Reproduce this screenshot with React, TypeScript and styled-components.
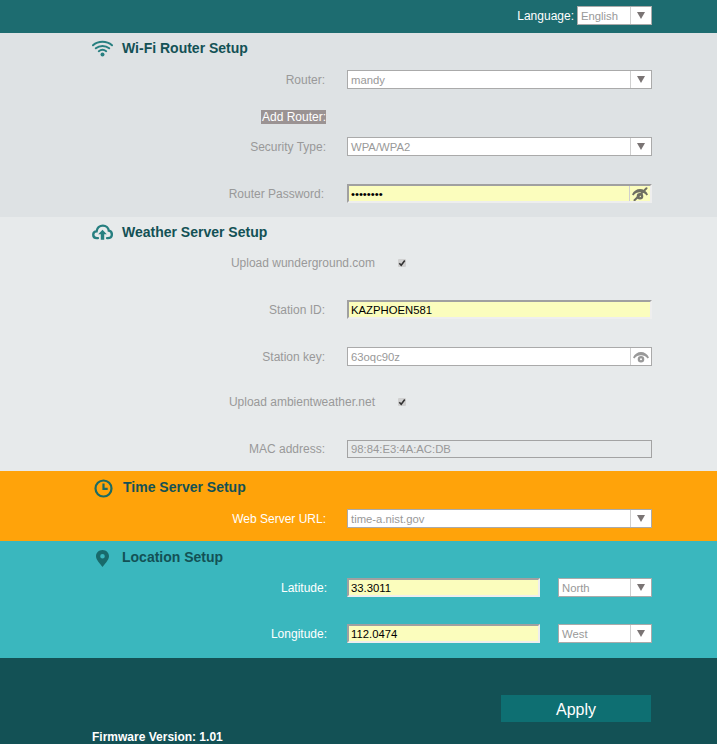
import React from "react";
import styled, { createGlobalStyle } from "styled-components";

const Global = createGlobalStyle`
  html, body { margin: 0; padding: 0; background: #135155; }
  body { font-family: "Liberation Sans", Arial, sans-serif; font-size: 12px; }
`;

const Page = styled.div`
  width: 717px;
  height: 744px;
  overflow: hidden;
  display: flex;
  flex-direction: column;
`;

const Header = styled.header`
  height: 33px;
  background: #1d6c70;
  display: flex;
  align-items: center;
  justify-content: flex-end;
  padding: 0 65px 2px 0;
  box-sizing: border-box;
  gap: 3px;
`;

const HeaderLabel = styled.span`
  color: #fff;
  font-size: 12px;
`;

const Section = styled.section<{ $bg: string; $h: number }>`
  background: ${(p) => p.$bg};
  height: ${(p) => p.$h}px;
  box-sizing: border-box;
  flex: none;
`;

const Title = styled.div<{ $top?: number }>`
  height: 30px;
  margin-top: ${(p) => p.$top ?? 0}px;
  padding-left: 92px;
  display: flex;
  align-items: center;
  gap: 9px;
`;

const TitleText = styled.h2<{ $left?: number }>`
  margin: 0 0 0 ${(p) => p.$left ?? 0}px;
  color: #135155;
  font-size: 14px;
  font-weight: bold;
`;

const IconSlot = styled.span<{ $end?: boolean; $drop?: number }>`
  width: 21px;
  height: 21px;
  padding-top: ${(p) => p.$drop ?? 0}px;
  box-sizing: border-box;
  display: flex;
  align-items: center;
  justify-content: ${(p) => (p.$end ? "flex-end" : "center")};
  flex: none;
`;

const Row = styled.div<{ $top: number; $h?: number }>`
  display: flex;
  align-items: center;
  height: ${(p) => p.$h ?? 19}px;
  margin-top: ${(p) => p.$top}px;
`;

const Label = styled.span<{ $w?: number; $light?: boolean }>`
  width: ${(p) => p.$w ?? 325}px;
  flex: none;
  text-align: right;
  color: ${(p) => (p.$light ? "#fff" : "#999")};
  font-size: 12px;
`;

const LabelCell = styled.span`
  width: 326px;
  flex: none;
  display: flex;
  justify-content: flex-end;
`;

const Highlight = styled.span`
  background: #9b9393;
  color: #fff;
  font-size: 12px;
  line-height: 14px;
  padding-left: 1px;
`;

const FieldBase = styled.div<{ $w?: number; $left?: number }>`
  width: ${(p) => p.$w ?? 305}px;
  margin-left: ${(p) => p.$left ?? 22}px;
  height: 19px;
  box-sizing: border-box;
  display: flex;
  align-items: stretch;
  flex: none;
  font-size: 11.3px;
`;

const Boxed = styled(FieldBase)`
  border: 1px solid #aaa;
  background: #fff;
  color: #999;
`;

const Disabled = styled(FieldBase)`
  height: 18px;
  border: 1px solid #a3a3a3;
  color: #999;
`;

const Inset = styled(FieldBase)`
  background: #fbfdbd;
  color: #000;
  border-style: solid;
  border-width: 2px 2px 2px 2px;
  border-color: #a0a0a0 #eeeeee #eeeeee #a0a0a0;
`;

const Value = styled.span<{ $inset?: boolean }>`
  flex: 1;
  min-width: 0;
  display: flex;
  align-items: center;
  padding-left: ${(p) => (p.$inset ? 2 : 3)}px;
  white-space: nowrap;
  overflow: hidden;
`;

const Addon = styled.span`
  width: 20px;
  flex: none;
  border-left: 1px solid #cfcfcf;
  display: flex;
  align-items: center;
  justify-content: center;
`;

const Arrow = styled.span`
  width: 0;
  height: 0;
  border-left: 4px solid transparent;
  border-right: 4px solid transparent;
  border-top: 7px solid #7a7474;
`;

const Check = styled.span`
  width: 8px;
  height: 8px;
  margin-left: 23px;
  background: #d0d0d0;
  border-radius: 1px;
  display: flex;
  align-items: center;
  justify-content: center;
  flex: none;
`;

const Footer = styled.footer`
  flex: 1;
  background: #135155;
  display: flex;
  flex-direction: column;
`;

const ApplyRow = styled.div`
  display: flex;
  justify-content: flex-end;
  padding: 37px 66px 0 0;
`;

const Apply = styled.button`
  width: 150px;
  height: 27px;
  border: 0;
  padding: 2px 0 0 0;
  background: #0e6f72;
  color: #fff;
  font-family: inherit;
  font-size: 16px;
`;

const Firmware = styled.div`
  padding: 8px 0 0 92px;
  color: #fff;
  font-weight: bold;
  font-size: 12px;
  line-height: 14px;
`;

const T1 = "#277f80";

const Wifi = () => (
  <svg width="21" height="17" viewBox="0 0 21 17" fill="none" stroke={T1} strokeWidth="2" strokeLinecap="round">
    <path d="M1 5.300C6.400.6 14.600.6 20 5.300" />
    <path d="M3.800 8.300c3.800-3.200 9.600-3.200 13.400 0" />
    <path d="M6.800 11.200c2.200-1.700 5.200-1.700 7.400 0" />
    <circle cx="10.500" cy="14.500" r="2" fill={T1} stroke="none" />
  </svg>
);

const Cloud = () => (
  <svg width="22" height="16" viewBox="0 0 22 16" fill="none">
    <path d="M6.200 14.400H5C2.800 14.400 1.300 12.900 1.300 10.900 1.300 8.900 2.800 7.400 4.800 7.400 5.200 3.800 8 1.300 11.400 1.300c3.300 0 5.800 2.300 6.200 5.300 1.900.3 3.200 2 3.200 3.900 0 2.300-1.700 3.900-4.100 3.900H15.800" stroke={T1} strokeWidth="2.500" strokeLinecap="round" />
    <path d="M11 5.600l4.500 4.800h-2.700V16H9.200v-5.600H6.500z" fill={T1} />
  </svg>
);

const Clock = () => (
  <svg width="19" height="19" viewBox="0 0 19 19" fill="none" stroke="#1b6b64" strokeWidth="2.200">
    <circle cx="9.500" cy="9.500" r="8" />
    <path d="M9.500 4.500v5.400h4.200" />
  </svg>
);

const Pin = () => (
  <svg width="13" height="17" viewBox="0 0 13 17">
    <path fillRule="evenodd" fill="#186a6b" d="M6.500 0C2.900 0 0 2.800 0 6.300c0 2.200 1.200 4 2.500 5.600 1.300 1.600 2.800 3.200 4 5.100 1.200-1.900 2.700-3.500 4-5.100C11.800 10.300 13 8.500 13 6.300 13 2.800 10.100 0 6.500 0zm0 4a2.300 2.300 0 110 4.600 2.300 2.300 0 010-4.600z" />
  </svg>
);

const Eye = ({ off }: { off?: boolean }) => (
  <svg width="16" height="14" viewBox="0 0 16 14" fill="none">
    <path fillRule="evenodd" fill={off ? "#6f6f62" : "#999"} d="M0 7.500C1.800 3.900 4.700 2 8 2s6.200 1.900 8 5.500l-1.500 1C13 6.300 10.700 5.300 8 5.300S3 6.300 1.500 8.500zM8 6a3.300 3.300 0 110 6.600A3.300 3.300 0 018 6zm0 2.300a1 1 0 100 2 1 1 0 000-2z" />
    {off && <path d="M2.500 13.300 14.500 1.200" stroke="#6f6f62" strokeWidth="2" strokeLinecap="round" />}
  </svg>
);

const CheckMark = () => (
  <svg width="8" height="8" viewBox="0 0 8 8" fill="none" stroke="#333" strokeWidth="1.600">
    <path d="M1.300 4.200 3.200 6.200 6.800 1.500" />
  </svg>
);

const SelectField = ({ value, w, left }: { value: string; w?: number; left?: number }) => (
  <Boxed $w={w} $left={left}>
    <Value>{value}</Value>
    <Addon><Arrow /></Addon>
  </Boxed>
);

export default function App() {
  return (
    <Page>
      <Global />
      <Header>
        <HeaderLabel>Language:</HeaderLabel>
        <SelectField value="English" w={75} left={0} />
      </Header>

      <Section $bg="#dee2e4" $h={184}>
        <Title><IconSlot><Wifi /></IconSlot><TitleText>Wi-Fi Router Setup</TitleText></Title>
        <Row $top={7}><Label>Router:</Label><SelectField value="mandy" /></Row>
        <Row $top={18}><LabelCell><Highlight>Add Router:</Highlight></LabelCell></Row>
        <Row $top={11}><Label $w={326}>Security Type:</Label><SelectField value="WPA/WPA2" left={21} /></Row>
        <Row $top={28}>
          <Label $w={324}>Router Password:</Label>
          <Inset $left={23}>
            <Value $inset>••••••••</Value>
            <Addon><Eye off /></Addon>
          </Inset>
        </Row>
      </Section>

      <Section $bg="#e7eaeb" $h={254}>
        <Title><IconSlot><Cloud /></IconSlot><TitleText>Weather Server Setup</TitleText></Title>
        <Row $top={6}><Label $w={375}>Upload wunderground.com</Label><Check><CheckMark /></Check></Row>
        <Row $top={28}><Label>Station ID:</Label><Inset><Value $inset>KAZPHOEN581</Value></Inset></Row>
        <Row $top={28}>
          <Label>Station key:</Label>
          <Boxed $left={22}><Value>63oqc90z</Value><Addon><Eye /></Addon></Boxed>
        </Row>
        <Row $top={26}><Label $w={375}>Upload ambientweather.net</Label><Check><CheckMark /></Check></Row>
        <Row $top={29} $h={18}><Label>MAC address:</Label><Disabled><Value>98:84:E3:4A:AC:DB</Value></Disabled></Row>
      </Section>

      <Section $bg="#ffa30a" $h={70}>
        <Title $top={1}><IconSlot $end $drop={2}><Clock /></IconSlot><TitleText $left={1}>Time Server Setup</TitleText></Title>
        <Row $top={7}><Label $light $w={326}>Web Server URL:</Label><SelectField value="time-a.nist.gov" left={21} /></Row>
      </Section>

      <Section $bg="#3ab7be" $h={117}>
        <Title $top={1}><IconSlot $drop={2}><Pin /></IconSlot><TitleText>Location Setup</TitleText></Title>
        <Row $top={6}>
          <Label $light $w={327}>Latitude:</Label>
          <Inset $w={193} $left={20}><Value $inset>33.3011</Value></Inset>
          <SelectField value="North" w={94} left={18} />
        </Row>
        <Row $top={27}>
          <Label $light $w={327}>Longitude:</Label>
          <Inset $w={193} $left={20}><Value $inset>112.0474</Value></Inset>
          <SelectField value="West" w={94} left={18} />
        </Row>
      </Section>

      <Footer>
        <ApplyRow><Apply>Apply</Apply></ApplyRow>
        <Firmware>Firmware Version: 1.01</Firmware>
      </Footer>
    </Page>
  );
}
